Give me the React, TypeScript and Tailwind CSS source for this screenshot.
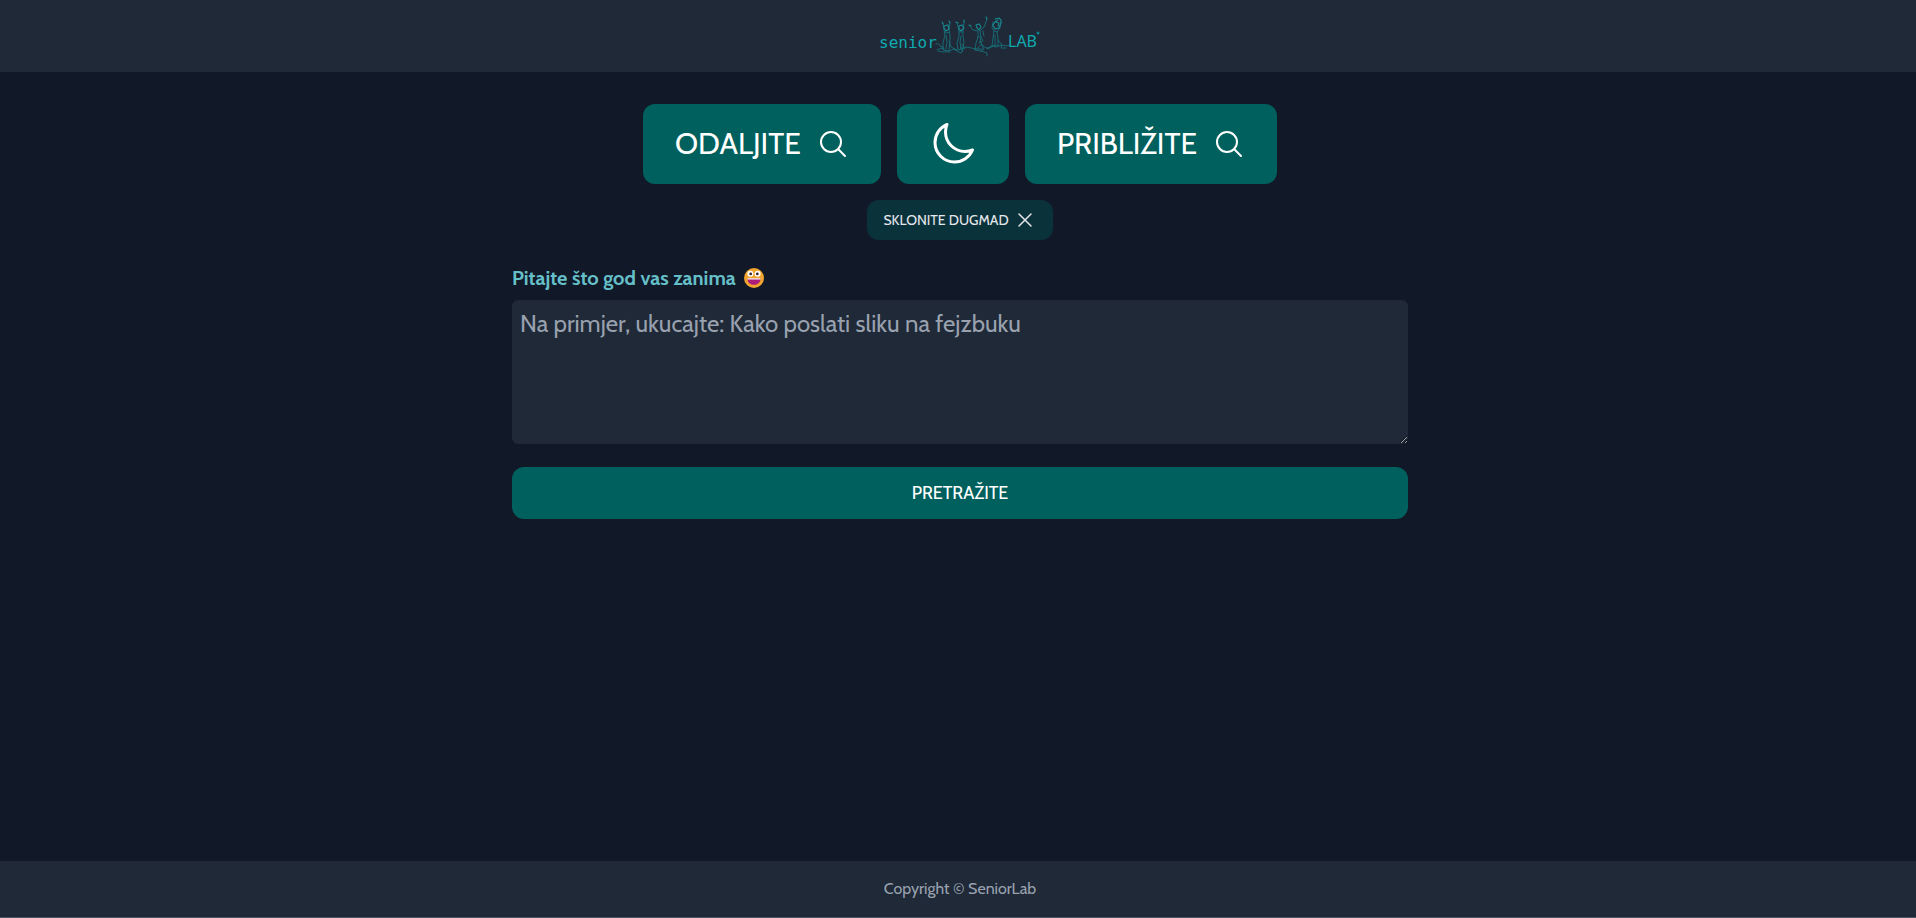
import { HiOutlineMagnifyingGlass, HiOutlineMoon, HiOutlineXMark } from "react-icons/hi2";

function Logo() {
  return (
    <svg viewBox="0 0 160 44" className="h-11 w-40" role="img" aria-label="senior LAB">
      <g fill="#0fa9b0" fontFamily="'DejaVu Sans Mono', monospace">
        <text x="-1" y="34" fontSize="16">senior</text>
        <text x="128" y="33" fontSize="16" fontFamily="'Noto Sans', sans-serif">LAB</text>
      </g>
      <circle cx="158" cy="19" r="1.500" fill="#0b8188" />
      <g fill="none" stroke="#17707a" strokeWidth="0.9" strokeLinejoin="round" strokeLinecap="round">
        <path d="M56 30c2-1 4 0 4 2l3 1 1 3M57 36l4-2 3 2 5 1 5-2 4 1 6-2 3-1 9 2 6 0M58 37c4 2 9 0 12 1M75 36l6 3 2-2-2-4" />
        <path d="M63 9l1 7 1 5-2 8 0 6M70 9l-1 7 1 5 0 6-1 9M65 18l3 1 1-1M66 21l1 7-1 7M69 27l2 6 4 2" />
        <path d="M77 9l2 8 0 5-2 7 1 6M84 8l-1 9 0 5 1 7-2 8M79 18l4 0M81 22l-1 6 1 7M82 30l3 5" />
        <path d="M90 12l3 4 5 1 0 6-2 6-1 7M107 5l-3 8-4 4 1 6-1 5M98 23l3 0 2 4-4 2M100 27l3 5 5 3 5-3 4-1M97 35l4-5 3 5-3 2 6 2 0 3M101 37l-6-1M103 17l1 5" />
        <path d="M113 8l-1 6 2 3-1 7-1 8M121 8l-1 6-3 4 1 6 0 8M114 17l3 1M115 21l0 10M111 32l5 1 6-2 4 1 4-1M118 26l4 5-1 3 5 0M107 34l6-2" />
      </g>
      <g fill="none" stroke="#1a8a92" strokeWidth="1.100" strokeLinecap="round">
        <path d="M62 8l1 2M69 7l1 2M64 12l4-1 1 4-3 2-2-3z" />
        <path d="M76 8l2 1M84 6l0 2M79 12l3-1 2 3-3 3-2-2z" />
        <path d="M89 11l2 1M106 3l1 2M96 11l3-1 2 3-2 3-2-2z" />
        <path d="M115 5l4-1 2 2 0 3-2 5-4 1-2-4 2-3 3-2M116 8l3 1-1 3" />
      </g>
    </svg>
  );
}

function GrinningFace() {
  return (
    <svg viewBox="0 0 20 20" className="size-5" aria-hidden="true">
      <circle cx="10" cy="10" r="10" fill="#f2a52e" />
      <circle cx="6.400" cy="5.800" r="3" fill="#fff" />
      <circle cx="13.600" cy="5.800" r="3" fill="#fff" />
      <circle cx="6.700" cy="5.900" r="1.400" fill="#402a32" />
      <circle cx="13.300" cy="5.900" r="1.400" fill="#402a32" />
      <path d="M3.500 10.500h13c0 4-2.700 6.300-6.500 6.300s-6.500-2.300-6.500-6.300z" fill="#ab1d78" />
      <path d="M3.500 10.300h13v1.200h-13z" fill="#fff" />
    </svg>
  );
}

export default function App() {
  return (
    <div className="flex min-h-screen flex-col bg-[#111827] font-[Cabin,Lato,sans-serif] text-white">
      <header className="flex h-18 items-center justify-center bg-[#1f2937] pl-1">
        <a href="#">
          <Logo />
        </a>
      </header>

      <main className="flex grow flex-col items-center pl-1">
        <div className="mt-8 flex justify-center gap-4">
          <button type="button" className="flex h-20 items-center gap-4 rounded-xl bg-[#00605d] px-8 text-3xl">
            ODALJITE
            <HiOutlineMagnifyingGlass className="size-8" />
          </button>
          <button type="button" aria-label="Tamni prikaz" className="flex h-20 items-center rounded-xl bg-[#00605d] px-8">
            <HiOutlineMoon className="size-12" />
          </button>
          <button type="button" className="flex h-20 items-center gap-4 rounded-xl bg-[#00605d] px-8 text-3xl">
            PRIBLIŽITE
            <HiOutlineMagnifyingGlass className="size-8" />
          </button>
        </div>
        <button type="button" className="mt-4 flex h-10 items-center gap-1 rounded-xl bg-[#0a323b] px-4 text-sm text-gray-200">
          SKLONITE DUGMAD
          <HiOutlineXMark className="size-6" />
        </button>

        <form className="mt-6 flex w-full max-w-4xl flex-col">
          <label htmlFor="question" className="flex h-7 items-center gap-2 text-xl font-bold text-[#65bfc8]">
            Pitajte što god vas zanima
            <GrinningFace />
          </label>
          <textarea
            id="question"
            placeholder="Na primjer, ukucajte: Kako poslati sliku na fejzbuku"
            className="mt-2 h-36 w-full rounded-md bg-[#1f2937] p-2 text-2xl placeholder:text-gray-400"
          />
          <button type="submit" className="mt-[23px] h-13 rounded-xl bg-[#00605d] text-lg">
            PRETRAŽITE
          </button>
        </form>
      </main>

      <footer className="flex h-[57px] items-center justify-center border-b border-[#4b5563] bg-[#1f2937] pl-1 text-gray-400">
        Copyright © SeniorLab
      </footer>
    </div>
  );
}
